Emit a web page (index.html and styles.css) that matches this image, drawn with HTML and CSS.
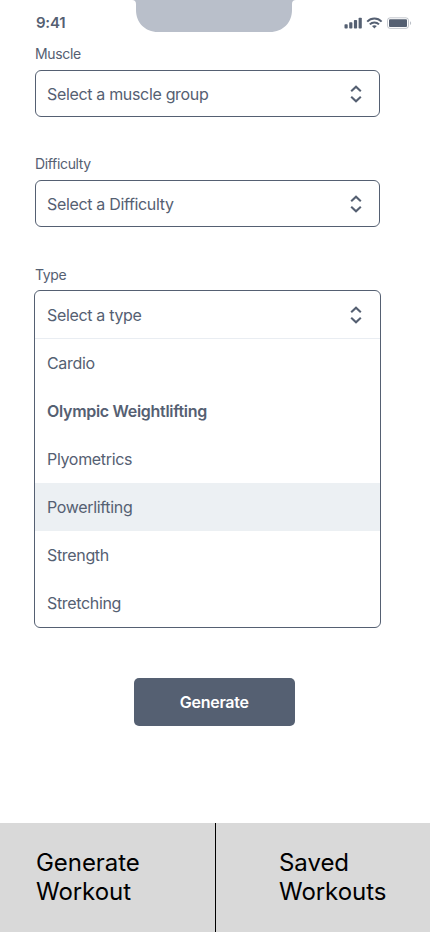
FILE: index.html
```html
<!DOCTYPE html>
<html lang="en">
<head>
<meta charset="utf-8">
<meta name="viewport" content="width=device-width, initial-scale=1">
<title>Generate Workout</title>
<link rel="stylesheet" href="styles.css">
</head>
<body>
<div class="screen">
  <header class="status-bar">
    <span class="time">9:41</span>
    <svg class="notch" width="164" height="32" viewBox="0 0 164 32"><path d="M0 0C2.700 0 4 1.500 4 4V10C4 22.500 13 32 26 32H138C151 32 160 22.500 160 10V4C160 1.500 161.300 0 164 0Z" fill="#b9bfca"/></svg>
    <svg class="status-icons" width="68" height="13" viewBox="0 0 68 13" fill="#556072">
      <rect x="0.500" y="7.300" width="3.200" height="4.200" rx=".8"/>
      <rect x="5.200" y="5.300" width="3.200" height="6.200" rx=".8"/>
      <rect x="9.900" y="3" width="3.200" height="8.500" rx=".8"/>
      <rect x="14.600" y=".8" width="3.200" height="10.700" rx=".8"/>
      <g fill="none" stroke="#556072" stroke-width="2">
        <path d="M23.200 4.600C27.200 .5 33.600 .5 37.600 4.600"/>
        <path d="M25.800 7.400C28.300 4.800 32.500 4.800 35 7.400"/>
      </g>
      <path d="M28 9.100C29.300 7.900 31.500 7.900 32.800 9.100L30.400 11.600Z"/>
      <rect x="43.500" y=".8" width="21" height="10.600" rx="2.600" fill="none" stroke="#556072" stroke-opacity=".35"/>
      <rect x="45" y="2.300" width="18" height="7.600" rx="1"/>
      <path d="M66 4.300V8.100C67.500 7.500 67.500 4.900 66 4.300Z" opacity=".4"/>
    </svg>
  </header>
  <main class="form">
    <section class="field">
      <div class="label">Muscle</div>
      <div class="select">
        <span>Select a muscle group</span>
        <svg class="chevrons" width="12" height="18" viewBox="0 0 12 18"><path d="M1.200 6.200L6 1.700L10.800 6.200M1.200 11.800L6 16.300L10.800 11.800"/></svg>
      </div>
    </section>
    <section class="field">
      <div class="label">Difficulty</div>
      <div class="select">
        <span>Select a Difficulty</span>
        <svg class="chevrons" width="12" height="18" viewBox="0 0 12 18"><path d="M1.200 6.200L6 1.700L10.800 6.200M1.200 11.800L6 16.300L10.800 11.800"/></svg>
      </div>
    </section>
    <section class="field field-open">
      <div class="label">Type</div>
      <div class="dropdown">
        <div class="dropdown-head">
          <span>Select a type</span>
          <svg class="chevrons" width="12" height="18" viewBox="0 0 12 18"><path d="M1.200 6.200L6 1.700L10.800 6.200M1.200 11.800L6 16.300L10.800 11.800"/></svg>
        </div>
        <ul class="options">
          <li class="option">Cardio</li>
          <li class="option selected">Olympic Weightlifting</li>
          <li class="option">Plyometrics</li>
          <li class="option hovered">Powerlifting</li>
          <li class="option">Strength</li>
          <li class="option">Stretching</li>
        </ul>
      </div>
    </section>
    <button class="generate">Generate</button>
  </main>
  <nav class="tabs">
    <a class="tab tab-generate">Generate<br>Workout</a>
    <a class="tab tab-saved">Saved<br>Workouts</a>
  </nav>
</div>
</body>
</html>
```
FILE: styles.css
```css
* { box-sizing: border-box; }

body {
  margin: 0;
  background: #fff;
  color: #556072;
  font-family: Inter, "Liberation Sans", sans-serif;
  font-size: 16px;
  font-weight: 400;
  letter-spacing: -0.33px;
}

.screen {
  display: flex;
  flex-direction: column;
  width: 430px;
  height: 932px;
  overflow: hidden;
}

.status-bar {
  display: grid;
  grid-template-columns: 132px 164px 1fr;
  height: 44px;
}

.time {
  padding: 13px 0 0 36px;
  font-size: 15px;
  font-weight: 600;
  line-height: 20px;
  letter-spacing: -0.25px;
}

.notch { display: block; }

.status-icons {
  display: block;
  margin: 17px 0 0 48px;
}

.form {
  display: flex;
  flex-direction: column;
  flex: 1;
  padding: 0 50px 0 35px;
}

.field { margin-bottom: 37px; }

.label {
  height: 26px;
  font-size: 14px;
  line-height: 20px;
  letter-spacing: -0.34px;
}

.select,
.dropdown-head {
  display: flex;
  align-items: center;
  justify-content: space-between;
  height: 47px;
  padding: 0 17px 0 11px;
  border: 1px solid #556072;
  border-radius: 6px;
}

.chevrons {
  fill: none;
  stroke: #556072;
  stroke-width: 2.1;
}

.field-open {
  margin: 1px -1px 50px;
}

.field-open .label {
  height: 25px;
  padding-left: 1px;
}

.dropdown {
  border: 1px solid #556072;
  border-radius: 6px;
  overflow: hidden;
}

.dropdown-head {
  height: 48px;
  padding: 0 18px 0 12px;
  border: 0;
  border-bottom: 1px solid #e9edf2;
  border-radius: 0;
}

.options {
  margin: 0;
  padding: 0;
  list-style: none;
}

.option {
  height: 48px;
  padding-left: 12px;
  line-height: 48px;
}

.selected {
  font-weight: 600;
  letter-spacing: -0.3px;
}

.hovered { background: #ecf0f3; }

.generate {
  align-self: flex-start;
  width: 160.5px;
  height: 48px;
  margin-left: 99px;
  padding: 0;
  border: 0;
  border-radius: 5px;
  background: #556072;
  color: #fff;
  font: inherit;
  font-weight: 600;
  letter-spacing: -0.28px;
}

.tabs {
  display: flex;
  height: 109px;
  background: #d9d9d9;
}

.tab {
  padding: 25px 0 0 36px;
  color: #000;
  font-size: 24px;
  line-height: 29px;
  letter-spacing: -0.05px;
}

.tab-generate { width: 215px; }

.tab-saved {
  flex: 1;
  padding-left: 63px;
  border-left: 1px solid #000;
}
```
